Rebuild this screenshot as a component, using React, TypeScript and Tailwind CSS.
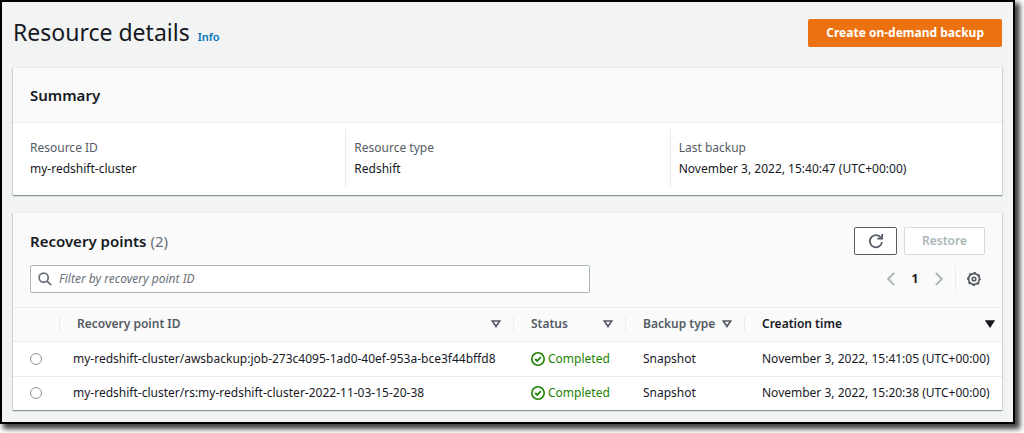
import React from "react";

const recoveryPoints = [
  {
    id: "my-redshift-cluster/awsbackup:job-273c4095-1ad0-40ef-953a-bce3f44bffd8",
    status: "Completed",
    type: "Snapshot",
    created: "November 3, 2022, 15:41:05 (UTC+00:00)",
  },
  {
    id: "my-redshift-cluster/rs:my-redshift-cluster-2022-11-03-15-20-38",
    status: "Completed",
    type: "Snapshot",
    created: "November 3, 2022, 15:20:38 (UTC+00:00)",
  },
];

const summary = [
  { label: "Resource ID", value: "my-redshift-cluster" },
  { label: "Resource type", value: "Redshift" },
  { label: "Last backup", value: "November 3, 2022, 15:40:47 (UTC+00:00)" },
];

const SearchIcon = () => (
  <svg className="h-[14px] w-[14px] shrink-0 text-[#687078]" viewBox="0 0 16 16" fill="none" stroke="currentColor" strokeWidth="2">
    <circle cx="6.5" cy="6.5" r="5.2" />
    <path d="M10.3 10.3 15 15" />
  </svg>
);

const RefreshIcon = () => (
  <svg className="h-4 w-4" viewBox="0 0 16 16" fill="none" stroke="currentColor" strokeWidth="1.8">
    <path d="M14 9A6.1 6.1 0 1 1 12.9 4.6" />
    <path d="M14.2 1V5.6H9.2" />
  </svg>
);

const ChevronIcon = ({ direction }: { direction: "left" | "right" }) => (
  <svg className="h-[14px] w-2" viewBox="0 0 8 14" fill="none" stroke="currentColor" strokeWidth="1.9">
    <path d={direction === "left" ? "M7.2 .8 1.2 7 7.2 13.2" : "M.8 .8 6.8 7 .8 13.2"} />
  </svg>
);

const GearIcon = () => (
  <svg className="h-[14px] w-[14px]" viewBox="0 0 14 14" fill="none" stroke="currentColor">
    <circle cx="7" cy="7" r="5.4" strokeWidth="1.6" />
    <circle cx="7" cy="7" r="6.3" strokeWidth="1.4" strokeDasharray="2.5 2.448" strokeDashoffset="1.25" />
    <circle cx="7" cy="7" r="1.8" strokeWidth="1.6" />
  </svg>
);

const CheckIcon = () => (
  <svg className="h-[14px] w-[14px] shrink-0" viewBox="0 0 14 14" fill="none" stroke="currentColor" strokeWidth="1.6">
    <circle cx="7" cy="7" r="6.2" />
    <path d="M4.2 7 6.3 9 9.8 5.2" strokeWidth="1.8" />
  </svg>
);

const SortIcon = ({ filled }: { filled?: boolean }) => (
  <svg className="h-[8px] w-[10px] shrink-0" viewBox="0 0 10 8" fill={filled ? "currentColor" : "none"} stroke="currentColor" strokeWidth="1.7">
    <path d="M1.4 1H8.6L5 6.4Z" />
  </svg>
);

const HeaderCell = ({ title, sorted, last }: { title: string; sorted?: boolean; last?: boolean }) => (
  <th className="p-0 font-semibold" aria-sort={sorted ? "descending" : "none"}>
    <button
      type="button"
      className={`flex h-4 w-full items-center justify-between border-l border-[#eaeded] pl-[17px] ${
        last ? "pr-[7px]" : "pr-3"
      } ${sorted ? "text-[#16191f]" : "text-[#545b64]"}`}
    >
      <span className="whitespace-nowrap">{title}</span>
      <SortIcon filled={sorted} />
    </button>
  </th>
);

const panel = "bg-white shadow-[0_1px_1px_0_rgba(0,28,36,0.3),1px_1px_1px_0_rgba(0,28,36,0.1),-1px_1px_1px_0_rgba(0,28,36,0.1)]";

const App = () => {
  return (
    <div className="bg-white pr-[9px] pb-[9px] font-['Noto_Sans',sans-serif] text-[12px] text-[#16191f]">
      <main className="border-2 border-black bg-[#f2f3f3] px-[11px] pt-[17px] pb-3 shadow-[4px_4px_5px_1px_rgba(0,0,0,0.75)]">
        <header className="mb-5 flex h-7 items-center justify-between">
          <div className="flex items-baseline gap-2">
            <h1 className="text-[23px] leading-6">Resource details</h1>
            <a href="#info" className="text-[11px] font-semibold text-[#0073bb]">
              Info
            </a>
          </div>
          <button type="button" className="h-7 rounded-[2px] bg-[#ec7211] px-[18px] text-[12px] font-bold text-white">
            Create on-demand backup
          </button>
        </header>

        <section className={panel}>
          <div className="flex h-14 items-center border-y border-[#eaeded] bg-[#fafafa] px-[17px]">
            <h2 className="text-[15px] font-semibold">Summary</h2>
          </div>
          <dl className="grid grid-cols-3 px-2 pt-[6px] pb-2">
            {summary.map((item) => (
              <div key={item.label} className="border-l border-[#eaeded] py-2 pl-2 leading-[21px] first:border-transparent">
                <dt className="text-[#545b64]">{item.label}</dt>
                <dd>{item.value}</dd>
              </div>
            ))}
          </dl>
        </section>

        <section className={`mt-[17px] ${panel}`}>
          <div className="border-y border-[#eaeded] bg-[#fafafa] px-[17px] pt-[14px] pb-[14px]">
            <div className="flex items-center justify-between">
              <h2 className="text-[15px] leading-5 font-semibold">
                Recovery points <span className="font-normal text-[#687078]">(2)</span>
              </h2>
              <div className="flex gap-[7px]">
                <button
                  type="button"
                  aria-label="Refresh"
                  className="flex h-7 w-[43px] items-center justify-center rounded-[2px] border border-[#545b64] bg-white text-[#545b64]"
                >
                  <RefreshIcon />
                </button>
                <button type="button" disabled className="h-7 rounded-[2px] border border-[#d5dbdb] bg-white px-[17px] text-[12px] font-semibold text-[#aab7b8]">
                  Restore
                </button>
              </div>
            </div>
            <div className="mt-[10px] flex items-center justify-between">
              <label className="flex h-7 w-[560px] items-center gap-[7px] rounded-[2px] border border-[#aab7b8] bg-white px-[7px]">
                <SearchIcon />
                <input
                  type="text"
                  aria-label="Filter by recovery point ID"
                  placeholder="Filter by recovery point ID"
                  className="w-full outline-none placeholder:text-[#687078] placeholder:italic"
                />
              </label>
              <div className="flex h-7 items-center">
                <button type="button" aria-label="Previous page" className="text-[#aab7b8]">
                  <ChevronIcon direction="left" />
                </button>
                <button type="button" className="w-10 text-center font-bold">
                  1
                </button>
                <button type="button" aria-label="Next page" className="text-[#aab7b8]">
                  <ChevronIcon direction="right" />
                </button>
                <span className="ml-3 h-7 border-l border-[#eaeded]" />
                <button type="button" aria-label="Preferences" className="mr-1 ml-[11px] text-[#545b64]">
                  <GearIcon />
                </button>
              </div>
            </div>
          </div>

          <table className="w-full table-fixed border-collapse text-left">
            <colgroup>
              <col className="w-[46px]" />
              <col />
              <col className="w-[112px]" />
              <col className="w-[119px]" />
              <col className="w-[258px]" />
            </colgroup>
            <thead>
              <tr className="h-[33px] border-b border-[#eaeded] bg-[#fafafa]">
                <td />
                <HeaderCell title="Recovery point ID" />
                <HeaderCell title="Status" />
                <HeaderCell title="Backup type" />
                <HeaderCell title="Creation time" sorted last />
              </tr>
            </thead>
            <tbody>
              {recoveryPoints.map((point) => (
                <tr key={point.id} className="h-[35px] border-b border-[#eaeded] whitespace-nowrap last:h-[34px] last:border-0">
                  <td className="pl-[17px]">
                    <input
                      type="radio"
                      name="recovery-point"
                      aria-label={point.id}
                      className="block h-3 w-3 appearance-none rounded-full border border-[#879596] bg-white checked:border-4 checked:border-[#0073bb]"
                    />
                  </td>
                  <td className="pl-[14px]">{point.id}</td>
                  <td className="pl-[18px]">
                    <span className="flex items-center gap-[3px] text-[#1d8102]">
                      <CheckIcon />
                      {point.status}
                    </span>
                  </td>
                  <td className="pl-[18px]">{point.type}</td>
                  <td className="pl-[18px]">{point.created}</td>
                </tr>
              ))}
            </tbody>
          </table>
        </section>
      </main>
    </div>
  );
};

export default App;
